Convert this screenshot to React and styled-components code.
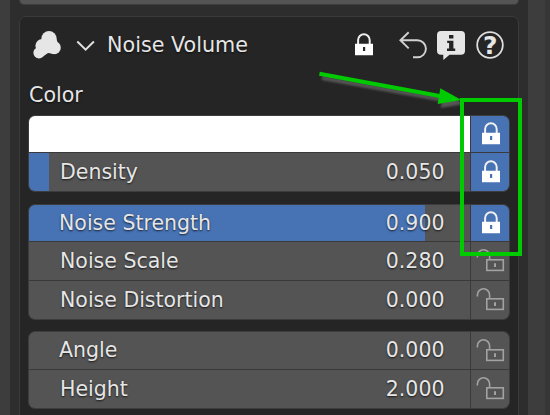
import React from "react";
import styled, { createGlobalStyle } from "styled-components";

const GlobalStyle = createGlobalStyle`
  * { box-sizing: border-box; }
  html, body { margin: 0; padding: 0; background: #2d2d2d; overflow: hidden; }
  svg { display: block; flex: none; }
`;

const Editor = styled.div`
  position: relative;
  display: grid;
  grid-template-columns: 10px 1fr 17px 5px;
  width: 550px;
  height: 415px;
  overflow: hidden;
  background: #2d2d2d;
  color: #e6e6e6;
  font: 20.5px/24px "DejaVu Sans", sans-serif;
`;

const Gutter = styled.div`
  background: ${(p) => p.$tone};
`;

const Column = styled.div`
  display: flex;
  flex-direction: column;
  gap: 11px;
  padding: 0 9px;
  min-width: 0;
  height: 415px;
`;

const PreviousBox = styled.div`
  height: 5px;
  flex: none;
  background: #545454;
  border: 1px solid #3d3d3d;
  border-top: 0;
  border-radius: 0 0 6px 6px;
`;

const Panel = styled.section`
  flex: none;
  height: 420px;
  padding: 0 8px;
  background: #252525;
  border: 1px solid #3b3b3b;
  border-radius: 7px;
`;

const Header = styled.header`
  display: flex;
  align-items: center;
  height: 56px;
  padding: 0 1px;
  color: #e6e6e6;
`;

const Title = styled.span`
  flex: 1;
  margin-left: 10px;
  font-size: 20.7px;
  white-space: nowrap;
  text-shadow: 0 1px 2px rgba(0, 0, 0, 0.7);
`;

const Label = styled.div`
  height: 42px;
  padding: 10px 0 0 1px;
  font-size: 20.6px;
  text-shadow: 0 1px 2px rgba(0, 0, 0, 0.7);
`;

const Group = styled.div`
  display: grid;
  gap: 1px;
  margin-bottom: ${(p) => p.$after}px;
  border: 1px solid #3d3d3d;
  border-radius: 7px;
  background: #3a3a3a;
  overflow: hidden;
`;

const Row = styled.div`
  display: grid;
  grid-template-columns: 441px 38px;
  gap: 1px;
  height: ${(p) => p.$height}px;
`;

const Field = styled.div`
  display: flex;
  align-items: center;
  justify-content: space-between;
  padding: 0 25.5px ${(p) => p.$lift || 0}px ${(p) => p.$indent || 31}px;
  white-space: nowrap;
  text-shadow: 0 1px 2px rgba(0, 0, 0, 0.75);
  background: ${(p) =>
    p.$white
      ? "#fff"
      : `linear-gradient(to right, #4772b3 ${p.$fill || 0}px, #545454 ${p.$fill || 0}px)`};
`;

const LockCell = styled.div`
  display: flex;
  align-items: center;
  justify-content: center;
  background: ${(p) => (p.$on ? "#4772b3" : "#545454")};
`;

const IconGap = styled.span`
  width: 12px;
  flex: none;
`;

const Annotation = styled.svg`
  position: absolute;
  inset: 0;
  pointer-events: none;
`;

const Lock = () => (
  <svg width="38" height="36" viewBox="0 0 38 36">
    <path d="M14.1 17.8V13.1a5.8 5.8 0 0 1 11.6 0V17.8" fill="none" stroke="#f0f0f0" strokeWidth="2" />
    <path fillRule="evenodd" fill="#fff" d="M11 16.8H29V28.3H11ZM19 20V24H21.2V20Z" />
  </svg>
);

const Unlock = () => (
  <svg width="38" height="36" viewBox="0 0 38 36">
    <g fill="none" stroke="#a2a2a2" strokeWidth="1.6">
      <path d="M6.4 14.5V12.9a6 6 0 0 1 12.2 0V16.5" />
      <rect x="15.8" y="16.8" width="16.5" height="10.6" />
    </g>
    <path fill="#a2a2a2" d="M23 20.2h2V24h-2z" />
  </svg>
);

const VolumeIcon = () => (
  <svg width="36" height="36" viewBox="29 27 36 36" fill="#e6e6e6">
    <circle cx="49" cy="38.5" r="7.6" />
    <circle cx="42.3" cy="45.8" r="6.9" />
    <circle cx="39" cy="52.8" r="5.6" />
    <circle cx="54.3" cy="47.7" r="6.5" />
    <path d="M42 40 56.3 38.5 57.5 42 55 54 48 53 43 56.5Z" />
  </svg>
);

const ChevronIcon = () => (
  <svg width="32" height="36" viewBox="65 27 32 36">
    <path d="M77.3 41.5 85.6 49.6 93.9 41.5" fill="none" stroke="#e0e0e0" strokeWidth="2" />
  </svg>
);

const UndoIcon = () => (
  <svg width="38" height="36" viewBox="394 27 38 36">
    <path d="M408.7 32.2 400.4 40.3 408.7 48.4M400.8 40.3H417.4a8.5 8.5 0 0 1 0 17H413" fill="none" stroke="#d2d2d2" strokeWidth="1.9" />
  </svg>
);

const InfoIcon = () => (
  <svg width="38" height="36" viewBox="432 27 38 36">
    <path fill="#e6e6e6" d="M441 31H461a4 4 0 0 1 4 4V50.7a4 4 0 0 1-4 4H449.5L443.3 60V54.7H441a4 4 0 0 1-4-4V35a4 4 0 0 1 4-4Z" />
    <path fill="#252525" d="M449 35H453.4V38.4H449ZM447.2 40.8H453.4V48.5H455.2V51H447V48.5H449.1V43.1H447.2Z" />
  </svg>
);

const HelpGlyph = styled.text`
  font: bold 25px "DejaVu Sans", sans-serif;
`;

const HelpIcon = () => (
  <svg width="39" height="36" viewBox="470 27 39 36">
    <circle cx="490" cy="45" r="12.8" fill="none" stroke="#dedede" strokeWidth="1.8" />
    <HelpGlyph x="490.2" y="54.2" textAnchor="middle" fill="#e6e6e6">?</HelpGlyph>
  </svg>
);

const groups = [
  {
    after: 12,
    rows: [
      { swatch: true, height: 36, locked: true },
      { name: "Density", value: "0.050", height: 38, fill: 20, locked: true },
    ],
  },
  {
    after: 11,
    rows: [
      { name: "Noise Strength", value: "0.900", height: 36, fill: 396, indent: 30, locked: true },
      { name: "Noise Scale", value: "0.280", height: 38 },
      { name: "Noise Distortion", value: "0.000", height: 38 },
    ],
  },
  {
    after: 0,
    rows: [
      { name: "Angle", value: "0.000", height: 37, lift: 2, indent: 30 },
      { name: "Height", value: "2.000", height: 38 },
    ],
  },
];

export default function App() {
  return (
    <>
      <GlobalStyle />
      <Editor>
        <Gutter $tone="#3d3d3d" />
        <Column>
          <PreviousBox />
          <Panel>
            <Header>
              <VolumeIcon />
              <ChevronIcon />
              <Title>Noise Volume</Title>
              <Lock />
              <IconGap />
              <UndoIcon />
              <InfoIcon />
              <HelpIcon />
            </Header>
            <Label>Color</Label>
            {groups.map((g, i) => (
              <Group key={i} $after={g.after}>
                {g.rows.map((r, j) => (
                  <Row key={j} $height={r.height}>
                    <Field $white={r.swatch} $fill={r.fill} $indent={r.indent} $lift={r.lift}>
                      <span>{r.name}</span>
                      <span>{r.value}</span>
                    </Field>
                    <LockCell $on={r.locked}>{r.locked ? <Lock /> : <Unlock />}</LockCell>
                  </Row>
                ))}
              </Group>
            ))}
          </Panel>
        </Column>
        <Gutter $tone="#3d3d3d" />
        <Gutter $tone="#363636" />
        <Annotation width="550" height="415" viewBox="0 0 550 415">
          <defs>
            <filter id="soft" x="-10%" y="-30%" width="120%" height="160%">
              <feGaussianBlur stdDeviation="1" />
            </filter>
          </defs>
          <g filter="url(#soft)" opacity="0.6" transform="translate(3 4)">
            <path d="M319 74 441 96" stroke="#777" strokeWidth="4" />
            <path d="M440.3 88.3 461 100 437.7 104Z" fill="#777" />
          </g>
          <rect x="462" y="100" width="58" height="154" fill="none" stroke="#00ca00" strokeWidth="4" />
          <path d="M319.4 73.8 441 96.3" stroke="#00ca00" strokeWidth="4" />
          <path d="M440.3 88.3 461.5 100 437.7 104Z" fill="#00ca00" />
        </Annotation>
      </Editor>
    </>
  );
}
